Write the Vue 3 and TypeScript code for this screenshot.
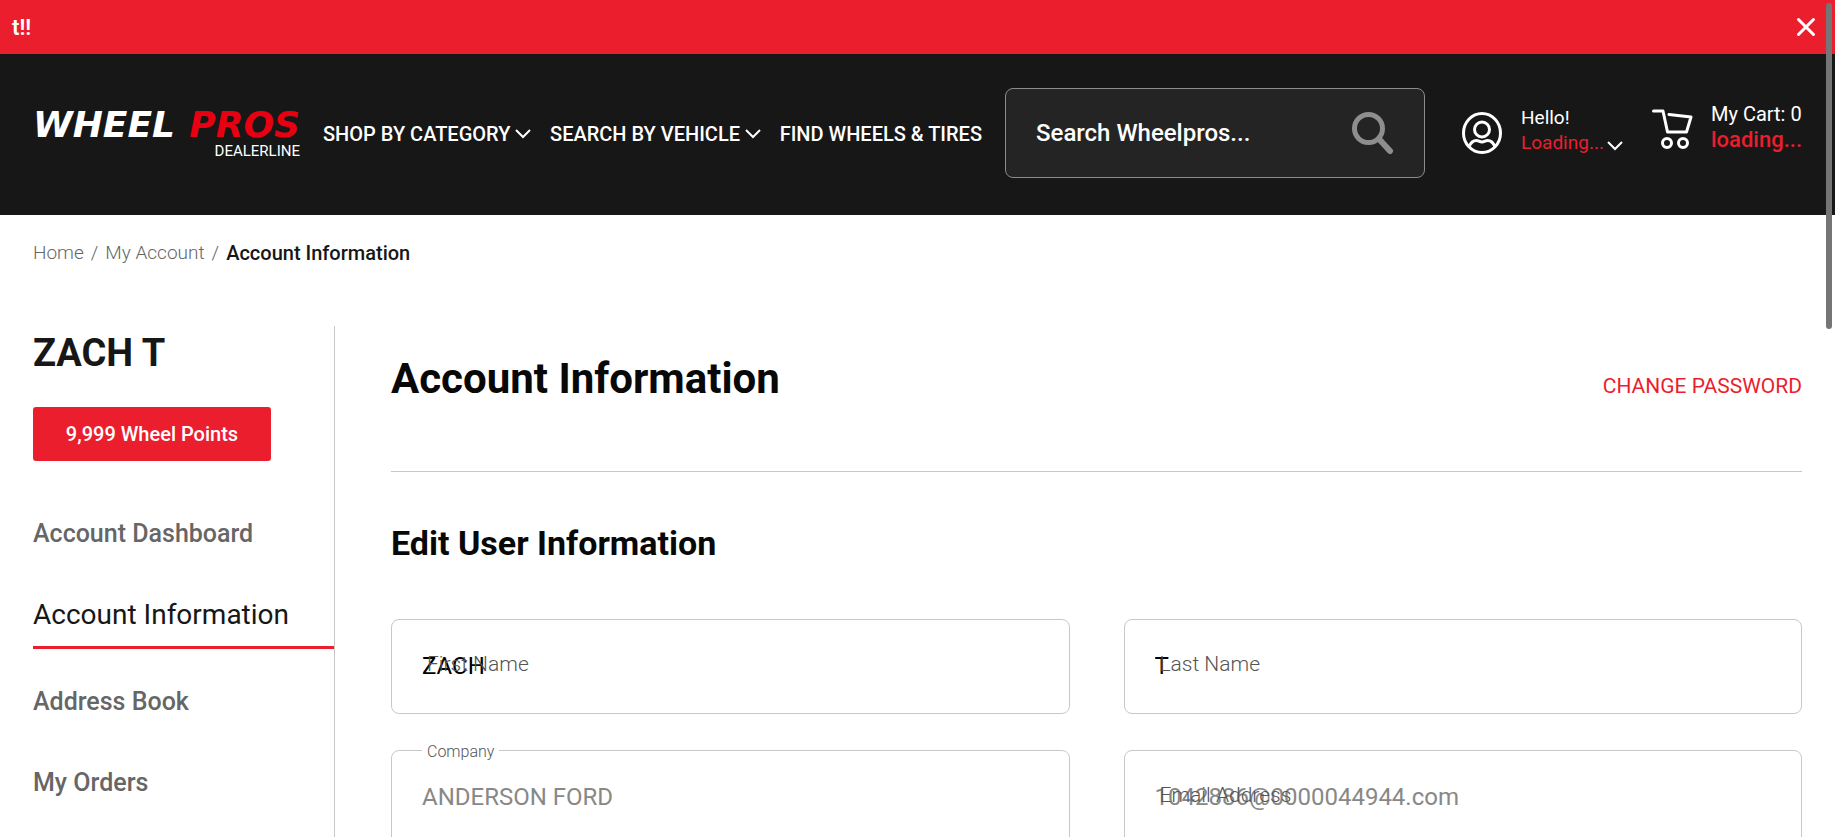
<script setup lang="ts">
import { ref } from 'vue'

interface NavItem {
  label: string
  menu: boolean
}

interface SideLink {
  label: string
  active: boolean
}

interface Field {
  id: string
  label: string
  value: string
  type: string
  disabled: boolean
  floated: boolean
}

const bannerOpen = ref(true)
const query = ref('')

const navItems: NavItem[] = [
  { label: 'SHOP BY CATEGORY', menu: true },
  { label: 'SEARCH BY VEHICLE', menu: true },
  { label: 'FIND WHEELS & TIRES', menu: false },
]

const sideLinks: SideLink[] = [
  { label: 'Account Dashboard', active: false },
  { label: 'Account Information', active: true },
  { label: 'Address Book', active: false },
  { label: 'My Orders', active: false },
]

const fields = ref<Field[]>([
  { id: 'first-name', label: 'First Name', value: 'ZACH', type: 'text', disabled: false, floated: false },
  { id: 'last-name', label: 'Last Name', value: 'T', type: 'text', disabled: false, floated: false },
  { id: 'company', label: 'Company', value: 'ANDERSON FORD', type: 'text', disabled: true, floated: true },
  { id: 'email', label: 'Email Address', value: '1042886@0000044944.com', type: 'email', disabled: true, floated: false },
])
</script>

<template>
  <div class="page">
    <div v-if="bannerOpen" class="banner">
      <span>t!!</span>
      <button type="button" class="banner-close" aria-label="Close" @click="bannerOpen = false">
        <svg width="20" height="20" viewBox="0 0 20 20" fill="none" stroke="currentColor" stroke-width="3" stroke-linecap="round">
          <path d="M2.5 2.5l15 15M17.5 2.5l-15 15" />
        </svg>
      </button>
    </div>

    <header class="header">
      <a href="#" class="logo">
        <span class="logo-name"><span>WHEEL</span><span class="logo-red">PROS</span></span>
        <span class="logo-sub">DEALERLINE</span>
      </a>

      <nav class="nav">
        <a v-for="item in navItems" :key="item.label" href="#" class="nav-item">
          {{ item.label }}
          <svg v-if="item.menu" class="chevron" width="16" height="10" viewBox="0 0 16 10" fill="none" stroke="currentColor" stroke-width="2">
            <path d="M1 1l7 7 7-7" />
          </svg>
        </a>
      </nav>

      <form class="search" role="search" @submit.prevent>
        <input v-model="query" type="text" placeholder="Search Wheelpros..." aria-label="Search Wheelpros" />
        <button type="submit" aria-label="Search">
          <svg width="44" height="44" viewBox="0 0 44 44" fill="none" stroke="currentColor">
            <circle cx="17.500" cy="17.500" r="14" stroke-width="5" />
            <path d="M28 28l11 12" stroke-width="6" stroke-linecap="round" />
          </svg>
        </button>
      </form>

      <a href="#" class="account">
        <svg width="42" height="44" viewBox="0 0 42 44" fill="none" stroke="currentColor" stroke-width="3">
          <ellipse cx="21" cy="22" rx="18.500" ry="19.500" />
          <circle cx="21" cy="18.500" r="7.500" />
          <path d="M8 36c1.500-4 4-6.500 7.500-6.500 2 0 3 1.500 5.500 1.500s3.500-1.500 5.500-1.500c3.500 0 6 2.500 7.500 6.500" />
        </svg>
        <span class="account-text">
          <span>Hello!</span>
          <span class="red">Loading...</span>
        </span>
        <svg class="chevron account-chevron" width="16" height="10" viewBox="0 0 16 10" fill="none" stroke="currentColor" stroke-width="2">
          <path d="M1 1l7 7 7-7" />
        </svg>
      </a>

      <a href="#" class="cart">
        <svg width="42" height="42" viewBox="0 0 42 42" fill="none" stroke="currentColor" stroke-width="3" stroke-linecap="round" stroke-linejoin="round">
          <path d="M2.500 3h9.500l4.500 21h19l4.500-15-22-2.500" />
          <circle cx="16" cy="35" r="4.500" />
          <circle cx="32" cy="35" r="4.500" />
        </svg>
        <span class="cart-text">
          <span>My Cart: 0</span>
          <span class="red cart-state">loading...</span>
        </span>
      </a>
    </header>

    <nav class="crumbs" aria-label="Breadcrumb">
      <a href="#">Home</a>
      <span>/</span>
      <a href="#">My Account</a>
      <span>/</span>
      <strong>Account Information</strong>
    </nav>

    <div class="layout">
      <aside class="side">
        <h2 class="user">ZACH T</h2>
        <button type="button" class="points">9,999 Wheel Points</button>
        <nav class="side-nav" aria-label="Account">
          <a
            v-for="link in sideLinks"
            :key="link.label"
            href="#"
            class="side-link"
            :class="{ active: link.active }"
          >{{ link.label }}</a>
        </nav>
      </aside>

      <main class="main">
        <div class="title-row">
          <h1>Account Information</h1>
          <a href="#" class="change">CHANGE PASSWORD</a>
        </div>
        <h2 class="subtitle">Edit User Information</h2>
        <form class="fields" @submit.prevent>
          <div v-for="field in fields" :key="field.id" class="field" :class="{ floated: field.floated }">
            <input :id="field.id" v-model="field.value" :type="field.type" :disabled="field.disabled" />
            <label :for="field.id">{{ field.label }}</label>
          </div>
        </form>
      </main>
    </div>

    <div class="scroll-thumb" aria-hidden="true"></div>
  </div>
</template>

<style>
body {
  margin: 0;
  background: #fff;
}
</style>

<style scoped>
.page {
  position: relative;
  height: 100vh;
  overflow: hidden;
  font-family: Roboto, "Liberation Sans", sans-serif;
  color: #171717;
}

.page *,
.page *::before {
  box-sizing: border-box;
}

a {
  color: inherit;
  text-decoration: none;
}

button {
  font-family: inherit;
  color: inherit;
  background: none;
  border: 0;
  padding: 0;
  cursor: pointer;
}

svg {
  display: block;
  flex: none;
}

h1,
h2 {
  margin: 0;
}

.banner {
  display: flex;
  align-items: center;
  justify-content: space-between;
  height: 54px;
  padding: 0 19px 0 12px;
  background: #eb1e2e;
  color: #fff;
  font-size: 22px;
  font-weight: 600;
}

.header {
  display: flex;
  align-items: center;
  padding: 34px 33px 37px;
  background: #171717;
  color: #fff;
}

.logo {
  width: 267px;
  display: flex;
  flex-direction: column;
  flex: none;
  padding-top: 4px;
}

.logo-name {
  display: flex;
  justify-content: space-between;
  font-family: "DejaVu Sans", sans-serif;
  font-size: 36px;
  line-height: 32px;
  font-weight: 700;
  font-style: italic;
}

.logo-red {
  color: #e60012;
}

.logo-sub {
  align-self: flex-end;
  font-size: 15px;
  line-height: 20px;
}

.nav {
  flex: 1;
  display: flex;
  justify-content: space-between;
  margin: 2px 23px 0;
}

.nav-item {
  display: flex;
  align-items: center;
  gap: 5px;
  font-size: 20px;
  line-height: 28px;
  font-weight: 500;
  white-space: nowrap;
}

.search {
  flex: none;
  width: 420px;
  height: 90px;
  display: flex;
  align-items: center;
  border: 1px solid #8c8c8c;
  border-radius: 8px;
  background: #242424;
  padding: 0 29px 0 30px;
}

.search input {
  flex: 1;
  min-width: 0;
  border: 0;
  padding: 0;
  outline: 0;
  background: none;
  color: #fff;
  font: 500 24px/32px Roboto, sans-serif;
}

.search input::placeholder {
  color: #fff;
  opacity: 1;
}

.search button {
  color: #8e8e8e;
}

.account,
.cart {
  display: flex;
  align-items: center;
  flex: none;
  line-height: 25px;
}

.account {
  width: 190px;
  margin-left: 36px;
  font-size: 19px;
}

.account-text,
.cart-text {
  display: flex;
  flex-direction: column;
}

.account-text {
  margin-left: 18px;
  padding-bottom: 6px;
}

.account-chevron {
  margin: 26px 0 0 3px;
}

.cart {
  padding-bottom: 12px;
  font-size: 20px;
}

.cart svg {
  margin-top: 4px;
}

.cart-text {
  width: 91px;
  margin-left: 18px;
  white-space: nowrap;
}

.red {
  color: #eb1e2e;
}

.cart-state {
  font-size: 22px;
  font-weight: 500;
}

.crumbs {
  display: flex;
  gap: 7px;
  padding: 26px 33px 0;
  font-size: 19px;
  line-height: 24px;
  font-weight: 300;
  color: #666;
}

.crumbs strong {
  font-size: 20px;
  font-weight: 500;
  color: #171717;
}

.layout {
  display: flex;
  padding: 61px 33px 0;
}

.side {
  flex: none;
  width: 302px;
  border-right: 1px solid #c8c8c8;
}

.user {
  padding-top: 7px;
  font-size: 38px;
  line-height: 40px;
}

.points {
  display: block;
  width: 238px;
  height: 54px;
  margin-top: 34px;
  border-radius: 3px;
  background: #eb1e2e;
  color: #fff;
  font-size: 20px;
  font-weight: 500;
}

.side-nav {
  padding-top: 39px;
}

.side-link {
  display: block;
  padding: 18px 0;
  margin-bottom: 13px;
  font-size: 25px;
  line-height: 32px;
  font-weight: 500;
  color: #666;
}

.side-link.active {
  padding-bottom: 15px;
  margin-bottom: 19px;
  border-bottom: 3px solid #eb1e2e;
  font-size: 28px;
  font-weight: 400;
  color: #171717;
}

.main {
  flex: 1;
  min-width: 0;
  padding-left: 56px;
}

.title-row {
  display: flex;
  align-items: center;
  justify-content: space-between;
  height: 146px;
  padding-bottom: 40px;
  border-bottom: 1px solid #c8c8c8;
}

h1 {
  font-size: 42px;
  line-height: 48px;
  color: #080808;
}

.change {
  padding-top: 14px;
  font-size: 21px;
  line-height: 24px;
  color: #eb1e2e;
}

.subtitle {
  padding-top: 51px;
  font-size: 34px;
  line-height: 40px;
  color: #080808;
}

.fields {
  display: grid;
  grid-template-columns: 1fr 1fr;
  gap: 36px 54px;
  padding: 56px 0 36px;
}

.field {
  position: relative;
}

.field input {
  display: block;
  width: 100%;
  height: 95px;
  padding: 0 30px 2px;
  border: 1px solid #c8c8c8;
  border-radius: 8px;
  outline: 0;
  background: #fff;
  color: #000;
  font: 400 24px/32px Roboto, sans-serif;
}

.field input:disabled {
  color: #888;
}

.field label {
  position: absolute;
  top: 33px;
  left: 36px;
  font-size: 21px;
  line-height: 24px;
  font-weight: 300;
  color: #555;
  pointer-events: none;
}

.field.floated label {
  top: -10px;
  left: 31px;
  padding: 0 5px;
  background: #fff;
  font-size: 16px;
}

.scroll-thumb {
  position: absolute;
  top: 3px;
  right: 3px;
  width: 6px;
  height: 39vh;
  border-radius: 3px;
  background: #757575;
}
</style>
